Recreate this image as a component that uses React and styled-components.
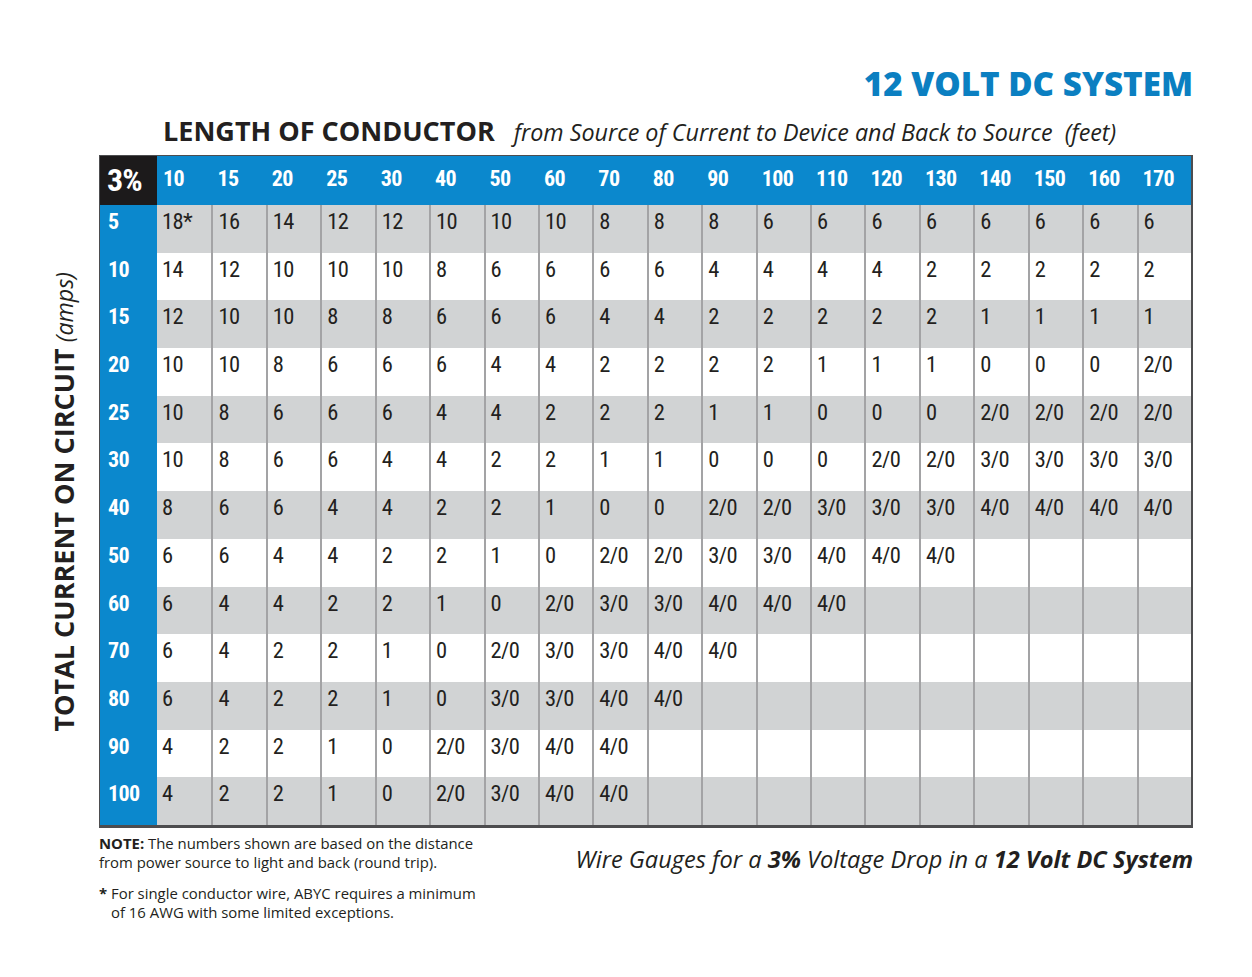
import React from 'react'
import styled, { createGlobalStyle } from 'styled-components'

const GlobalStyle = createGlobalStyle`
  body {
    margin: 0;
    background: #ffffff;
    font-family: "Open Sans", "Liberation Sans", sans-serif;
    color: #231f20;
  }
`;

const Page = styled.div`
  width: 1252px;
  box-sizing: border-box;
  padding: 62px 59px 0 52px;
`;

const Title = styled.h1`
  margin: 0;
  text-align: right;
  font-family: "Open Sans", sans-serif;
  font-weight: 800;
  font-size: 33.2px;
  line-height: 44px;
  color: #0b7fc1;
`;

const SubHeading = styled.div`
  display: flex;
  align-items: baseline;
  gap: 19px;
  margin: 6px 0 0 111px;
  height: 43px;
`;

const BoldCaps = styled.span`
  font-weight: 700;
  font-size: 27px;
  color: #231f20;
`;

const Italic = styled.span`
  font-style: italic;
  font-weight: ${({ $bold }) => ($bold ? 700 : 400)};
  font-size: ${({ $size }) => $size || 23.3}px;
  color: #231f20;
`;

const Main = styled.div`
  display: flex;
  align-items: stretch;
`;

const SideLabel = styled.div`
  width: 47px;
  display: flex;
  align-items: center;
  justify-content: flex-start;
  padding-top: 20px;
`;

const SideText = styled.div`
  writing-mode: vertical-rl;
  transform: rotate(180deg);
  white-space: nowrap;
  margin-left: -7px;
`;

const Grid = styled.div`
  display: grid;
  grid-template-columns: 57px repeat(19, 1fr);
  grid-template-rows: 49px repeat(13, 47.7px);
  width: 1094px;
  box-sizing: border-box;
  border: 1px solid #4d4d4f;
  border-right-width: 2px;
  border-bottom-width: 3px;
  font-family: "Roboto Condensed", "Roboto", sans-serif;
  font-stretch: condensed;
`;

const Corner = styled.div`
  background: #1c1a1b;
  color: #ffffff;
  font-weight: 700;
  font-size: 32px;
  display: flex;
  align-items: center;
  padding: 0 0 2px 7px;
  letter-spacing: -1px;
`;

const HeadCell = styled.div`
  background: #0b88cd;
  color: #ffffff;
  font-weight: 700;
  font-size: 22px;
  display: flex;
  align-items: center;
  padding: 0 0 5px 6px;
  letter-spacing: -0.6px;
`;

const RowHead = styled.div`
  background: #0b88cd;
  color: #ffffff;
  font-weight: 700;
  font-size: 22px;
  padding: 4px 0 0 8px;
  letter-spacing: -0.6px;
`;

const Cell = styled.div`
  background: ${({ $shade }) => ($shade ? '#d1d3d4' : '#ffffff')};
  color: #231f20;
  font-size: 22.5px;
  font-weight: 400;
  padding: 3px 0 0 5px;
  border-left: ${({ $first }) => ($first ? 'none' : '2px solid #a3a3a5')};
  letter-spacing: -0.6px;
`;

const Footer = styled.div`
  display: flex;
  justify-content: space-between;
  align-items: flex-start;
  margin: 6px 0 0 47px;
`;

const Notes = styled.div`
  font-size: 14.9px;
  line-height: 19px;
  color: #231f20;
`;

const Note = styled.p`
  margin: 0 0 12px 0;
  padding-left: ${({ $hang }) => ($hang ? 12 : 0)}px;
  text-indent: ${({ $hang }) => ($hang ? -12 : 0)}px;
`;

const Caption = styled.div`
  margin-top: 9px;
`;

const lengths = [10, 15, 20, 25, 30, 40, 50, 60, 70, 80, 90, 100, 110, 120, 130, 140, 150, 160, 170]

const rows = [
  [5, '18* 16 14 12 12 10 10 10 8 8 8 6 6 6 6 6 6 6 6'],
  [10, '14 12 10 10 10 8 6 6 6 6 4 4 4 4 2 2 2 2 2'],
  [15, '12 10 10 8 8 6 6 6 4 4 2 2 2 2 2 1 1 1 1'],
  [20, '10 10 8 6 6 6 4 4 2 2 2 2 1 1 1 0 0 0 2/0'],
  [25, '10 8 6 6 6 4 4 2 2 2 1 1 0 0 0 2/0 2/0 2/0 2/0'],
  [30, '10 8 6 6 4 4 2 2 1 1 0 0 0 2/0 2/0 3/0 3/0 3/0 3/0'],
  [40, '8 6 6 4 4 2 2 1 0 0 2/0 2/0 3/0 3/0 3/0 4/0 4/0 4/0 4/0'],
  [50, '6 6 4 4 2 2 1 0 2/0 2/0 3/0 3/0 4/0 4/0 4/0'],
  [60, '6 4 4 2 2 1 0 2/0 3/0 3/0 4/0 4/0 4/0'],
  [70, '6 4 2 2 1 0 2/0 3/0 3/0 4/0 4/0'],
  [80, '6 4 2 2 1 0 3/0 3/0 4/0 4/0'],
  [90, '4 2 2 1 0 2/0 3/0 4/0 4/0'],
  [100, '4 2 2 1 0 2/0 3/0 4/0 4/0'],
]

export default function App() {
  return (
    <Page>
      <GlobalStyle />
      <Title>12 VOLT DC SYSTEM</Title>
      <SubHeading>
        <BoldCaps>LENGTH OF CONDUCTOR</BoldCaps>
        <Italic>from Source of Current to Device and Back to Source&nbsp; (feet)</Italic>
      </SubHeading>
      <Main>
        <SideLabel>
          <SideText>
            <BoldCaps>TOTAL CURRENT ON CIRCUIT</BoldCaps>
            <Italic> (amps)</Italic>
          </SideText>
        </SideLabel>
        <Grid>
          <Corner>3%</Corner>
          {lengths.map((l) => (
            <HeadCell key={l}>{l}</HeadCell>
          ))}
          {rows.map(([amps, vals], i) => {
            const list = vals.split(' ')
            return (
              <React.Fragment key={amps}>
                <RowHead>{amps}</RowHead>
                {lengths.map((l, j) => (
                  <Cell key={l} $shade={i % 2 === 0} $first={j === 0}>
                    {list[j] || ''}
                  </Cell>
                ))}
              </React.Fragment>
            )
          })}
        </Grid>
      </Main>
      <Footer>
        <Notes>
          <Note>
            <b>NOTE:</b> The numbers shown are based on the distance<br />
            from power source to light and back (round trip).
          </Note>
          <Note $hang>
            <b>*</b> For single conductor wire, ABYC requires a minimum<br />
            of 16 AWG with some limited exceptions.
          </Note>
        </Notes>
        <Caption>
          <Italic $size={23.6}>Wire Gauges for a </Italic>
          <Italic $size={23.6} $bold>3%</Italic>
          <Italic $size={23.6}> Voltage Drop in a </Italic>
          <Italic $size={23.6} $bold>12 Volt DC System</Italic>
        </Caption>
      </Footer>
    </Page>
  )
}
